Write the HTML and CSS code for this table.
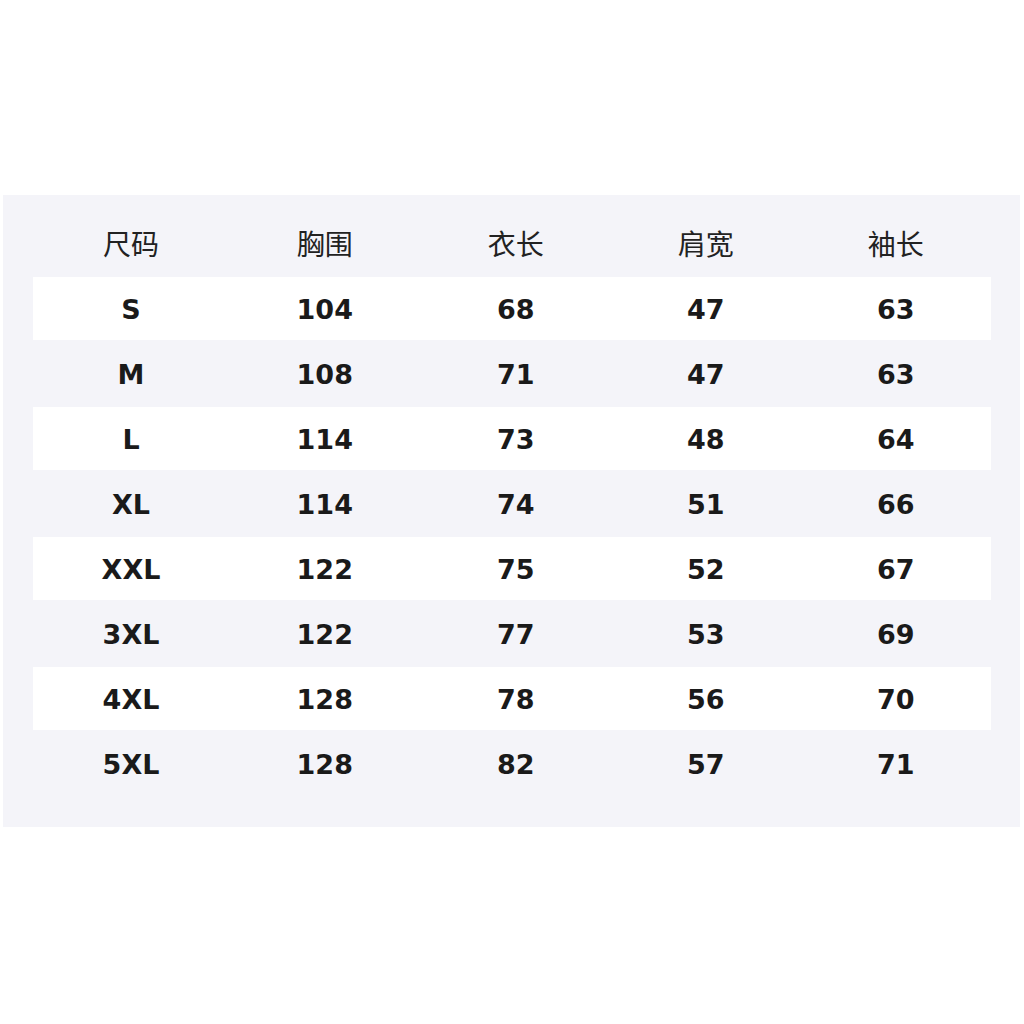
FILE: index.html
```html
<!DOCTYPE html>
<html lang="zh">
<head>
<meta charset="utf-8">
<link rel="stylesheet" href="styles.css">
</head>
<body>
<div class="page">
  <div class="panel">
    <div class="row head"><div>尺码</div><div>胸围</div><div>衣长</div><div>肩宽</div><div>袖长</div></div>
    <div class="row w"><div>S</div><div>104</div><div>68</div><div>47</div><div>63</div></div>
    <div class="row g"><div>M</div><div>108</div><div>71</div><div>47</div><div>63</div></div>
    <div class="row w"><div>L</div><div>114</div><div>73</div><div>48</div><div>64</div></div>
    <div class="row g"><div>XL</div><div>114</div><div>74</div><div>51</div><div>66</div></div>
    <div class="row w"><div>XXL</div><div>122</div><div>75</div><div>52</div><div>67</div></div>
    <div class="row g"><div>3XL</div><div>122</div><div>77</div><div>53</div><div>69</div></div>
    <div class="row w"><div>4XL</div><div>128</div><div>78</div><div>56</div><div>70</div></div>
    <div class="row g"><div>5XL</div><div>128</div><div>82</div><div>57</div><div>71</div></div>
  </div>
</div>
</body>
</html>
```
FILE: styles.css
```css
html, body {
  margin: 0;
  padding: 0;
  background: #ffffff;
}
.page {
  width: 1024px;
  height: 1024px;
  padding-top: 195px;
  padding-left: 3px;
  box-sizing: border-box;
}
.panel {
  width: 1017px;
  height: 632px;
  box-sizing: border-box;
  background: #f4f4f9;
  padding: 15px 29px 30px 30px;
}
.row {
  display: grid;
  grid-template-columns: 196px 191.5px 190.5px 189.5px 190.5px;
  align-items: center;
  justify-items: center;
  width: 958px;
}
.row.head {
  height: 67px;
  font-family: "Noto Sans CJK SC", sans-serif;
  font-size: 28px;
  font-weight: 400;
  color: #222222;
  padding-bottom: 2px;
  box-sizing: border-box;
}
.row.w {
  height: 63px;
  background: #ffffff;
}
.row.g {
  height: 67px;
}
.row.w, .row.g {
  font-family: "DejaVu Sans", sans-serif;
  font-weight: bold;
  font-size: 27px;
  color: #1a1a1a;
  padding-top: 2px;
  box-sizing: border-box;
}
```
